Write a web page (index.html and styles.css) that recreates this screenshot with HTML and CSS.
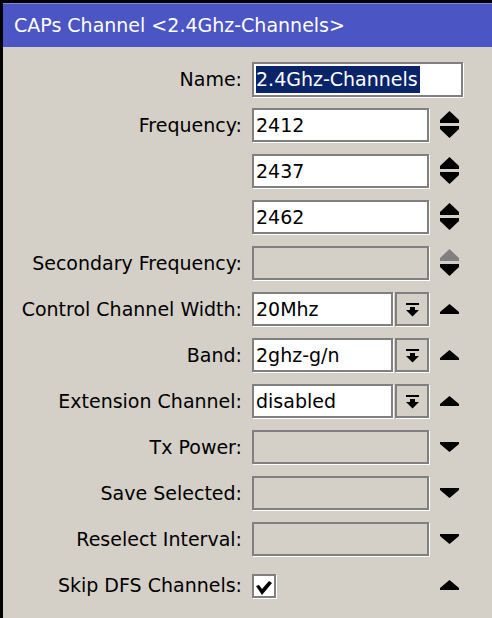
FILE: index.html
```html
<!DOCTYPE html>
<html lang="en">
<head>
    <meta charset="UTF-8">
    <title>CAPs Channel &lt;2.4Ghz-Channels&gt;</title>
    <link rel="stylesheet" href="styles.css">
</head>
<body>

<div class="window">
    <div class="title-bar">CAPs Channel &lt;2.4Ghz-Channels&gt;</div>

    <div class="form">
        <div class="row">
            <div class="label">Name:</div>
            <div class="field field-wide"><span class="selected">2.4Ghz-Channels</span></div>
        </div>

        <div class="row">
            <div class="label">Frequency:</div>
            <div class="field">2412</div>
            <svg class="toggle" width="19" height="28" viewBox="0 0 19 28">
                <polygon points="9.5,0 19,9 19,12 0,12 0,9" fill="#000"/>
                <polygon points="0,15 19,15 19,18 9.5,27 0,18" fill="#000"/>
            </svg>
        </div>

        <div class="row">
            <div class="label"></div>
            <div class="field">2437</div>
            <svg class="toggle" width="19" height="28" viewBox="0 0 19 28">
                <polygon points="9.5,0 19,9 19,12 0,12 0,9" fill="#000"/>
                <polygon points="0,15 19,15 19,18 9.5,27 0,18" fill="#000"/>
            </svg>
        </div>

        <div class="row">
            <div class="label"></div>
            <div class="field">2462</div>
            <svg class="toggle" width="19" height="28" viewBox="0 0 19 28">
                <polygon points="9.5,0 19,9 19,12 0,12 0,9" fill="#000"/>
                <polygon points="0,15 19,15 19,18 9.5,27 0,18" fill="#000"/>
            </svg>
        </div>

        <div class="row">
            <div class="label">Secondary Frequency:</div>
            <div class="field disabled"></div>
            <svg class="toggle" width="19" height="28" viewBox="0 0 19 28">
                <polygon points="9.5,0 19,9 19,12 0,12 0,9" fill="#808080"/>
                <polygon points="0,15 19,15 19,18 9.5,27 0,18" fill="#000"/>
            </svg>
        </div>

        <div class="row">
            <div class="label">Control Channel Width:</div>
            <div class="combo">
                <div class="field combo-text">20Mhz</div>
                <div class="combo-button">
                    <svg width="13" height="14" viewBox="0 0 13 14">
                        <rect x="0" y="0" width="13" height="2" fill="#000"/>
                        <rect x="4" y="4" width="5" height="3" fill="#000"/>
                        <polygon points="0,7 13,7 6.5,13.5" fill="#000"/>
                    </svg>
                </div>
            </div>
            <svg class="toggle" width="19" height="10" viewBox="0 0 19 10">
                <polygon points="9.5,0 19,8 19,10 0,10 0,8" fill="#000"/>
            </svg>
        </div>

        <div class="row">
            <div class="label">Band:</div>
            <div class="combo">
                <div class="field combo-text">2ghz-g/n</div>
                <div class="combo-button">
                    <svg width="13" height="14" viewBox="0 0 13 14">
                        <rect x="0" y="0" width="13" height="2" fill="#000"/>
                        <rect x="4" y="4" width="5" height="3" fill="#000"/>
                        <polygon points="0,7 13,7 6.5,13.5" fill="#000"/>
                    </svg>
                </div>
            </div>
            <svg class="toggle" width="19" height="10" viewBox="0 0 19 10">
                <polygon points="9.5,0 19,8 19,10 0,10 0,8" fill="#000"/>
            </svg>
        </div>

        <div class="row">
            <div class="label">Extension Channel:</div>
            <div class="combo">
                <div class="field combo-text">disabled</div>
                <div class="combo-button">
                    <svg width="13" height="14" viewBox="0 0 13 14">
                        <rect x="0" y="0" width="13" height="2" fill="#000"/>
                        <rect x="4" y="4" width="5" height="3" fill="#000"/>
                        <polygon points="0,7 13,7 6.5,13.5" fill="#000"/>
                    </svg>
                </div>
            </div>
            <svg class="toggle" width="19" height="10" viewBox="0 0 19 10">
                <polygon points="9.5,0 19,8 19,10 0,10 0,8" fill="#000"/>
            </svg>
        </div>

        <div class="row">
            <div class="label">Tx Power:</div>
            <div class="field disabled"></div>
            <svg class="toggle" width="19" height="10" viewBox="0 0 19 10">
                <polygon points="0,0 19,0 19,2 9.5,10 0,2" fill="#000"/>
            </svg>
        </div>

        <div class="row">
            <div class="label">Save Selected:</div>
            <div class="field disabled"></div>
            <svg class="toggle" width="19" height="10" viewBox="0 0 19 10">
                <polygon points="0,0 19,0 19,2 9.5,10 0,2" fill="#000"/>
            </svg>
        </div>

        <div class="row">
            <div class="label">Reselect Interval:</div>
            <div class="field disabled"></div>
            <svg class="toggle" width="19" height="10" viewBox="0 0 19 10">
                <polygon points="0,0 19,0 19,2 9.5,10 0,2" fill="#000"/>
            </svg>
        </div>

        <div class="row">
            <div class="label">Skip DFS Channels:</div>
            <div class="check-cell">
                <div class="checkbox">
                    <svg width="16" height="15" viewBox="0 0 16 15">
                        <polygon points="0,6 3,5 6,9 13,1 16,3 6,15" fill="#000"/>
                    </svg>
                </div>
            </div>
            <svg class="toggle" width="19" height="10" viewBox="0 0 19 10">
                <polygon points="9.5,0 19,8 19,10 0,10 0,8" fill="#000"/>
            </svg>
        </div>
    </div>
</div>

</body>
</html>
```

FILE: styles.css
```css
body {
    margin: 0;
    padding: 0;
    background-color: #d4d0c8;
    font-family: "DejaVu Sans", Verdana, sans-serif;
    font-size: 19px;
    color: #000;
}

.window {
    height: 615px;
    border-top: 3px solid #000;
    border-left: 3px solid #000;
    background-color: #d4d0c8;
}

.title-bar {
    height: 43px;
    border-top: 1px solid #7e86d8;
    background-color: #4b55c4;
    color: #fff;
    font-size: 19px;
    line-height: 42px;
    padding-left: 11px;
}

.form {
    padding-top: 15px;
    display: flex;
    flex-direction: column;
    gap: 12px;
}

.row {
    display: flex;
    align-items: center;
    height: 34px;
}

.label {
    width: 239px;
    margin-right: 10px;
    text-align: right;
    white-space: nowrap;
}

.field {
    box-sizing: border-box;
    width: 177px;
    height: 34px;
    border: 2px solid #808080;
    box-shadow: 1px 1px 0 #fff;
    background-color: #fff;
    padding-left: 2px;
    line-height: 30px;
    white-space: nowrap;
}

.field-wide {
    width: 211px;
    height: 35px;
    padding-top: 2px;
    line-height: 27px;
}

.selected {
    display: inline-block;
    background-color: #0a246a;
    color: #fff;
    padding-right: 2px;
}

.disabled {
    background-color: #d4d0c8;
}

.toggle {
    margin-left: 11px;
    display: block;
}

.combo {
    display: flex;
    width: 177px;
}

.combo-text {
    width: 141px;
}

.combo-button {
    box-sizing: border-box;
    width: 34px;
    height: 34px;
    margin-left: 2px;
    border: 2px solid #808080;
    box-shadow: 1px 1px 0 #fff;
    display: flex;
    align-items: center;
    justify-content: center;
    padding-top: 1px;
}

.check-cell {
    width: 177px;
}

.checkbox {
    box-sizing: border-box;
    width: 24px;
    height: 24px;
    border: 2px solid #808080;
    box-shadow: 1px 1px 0 #fff;
    background-color: #fff;
    display: flex;
    align-items: flex-end;
    justify-content: flex-start;
    padding: 0 0 1px 2px;
    margin-top: 2px;
}
```
